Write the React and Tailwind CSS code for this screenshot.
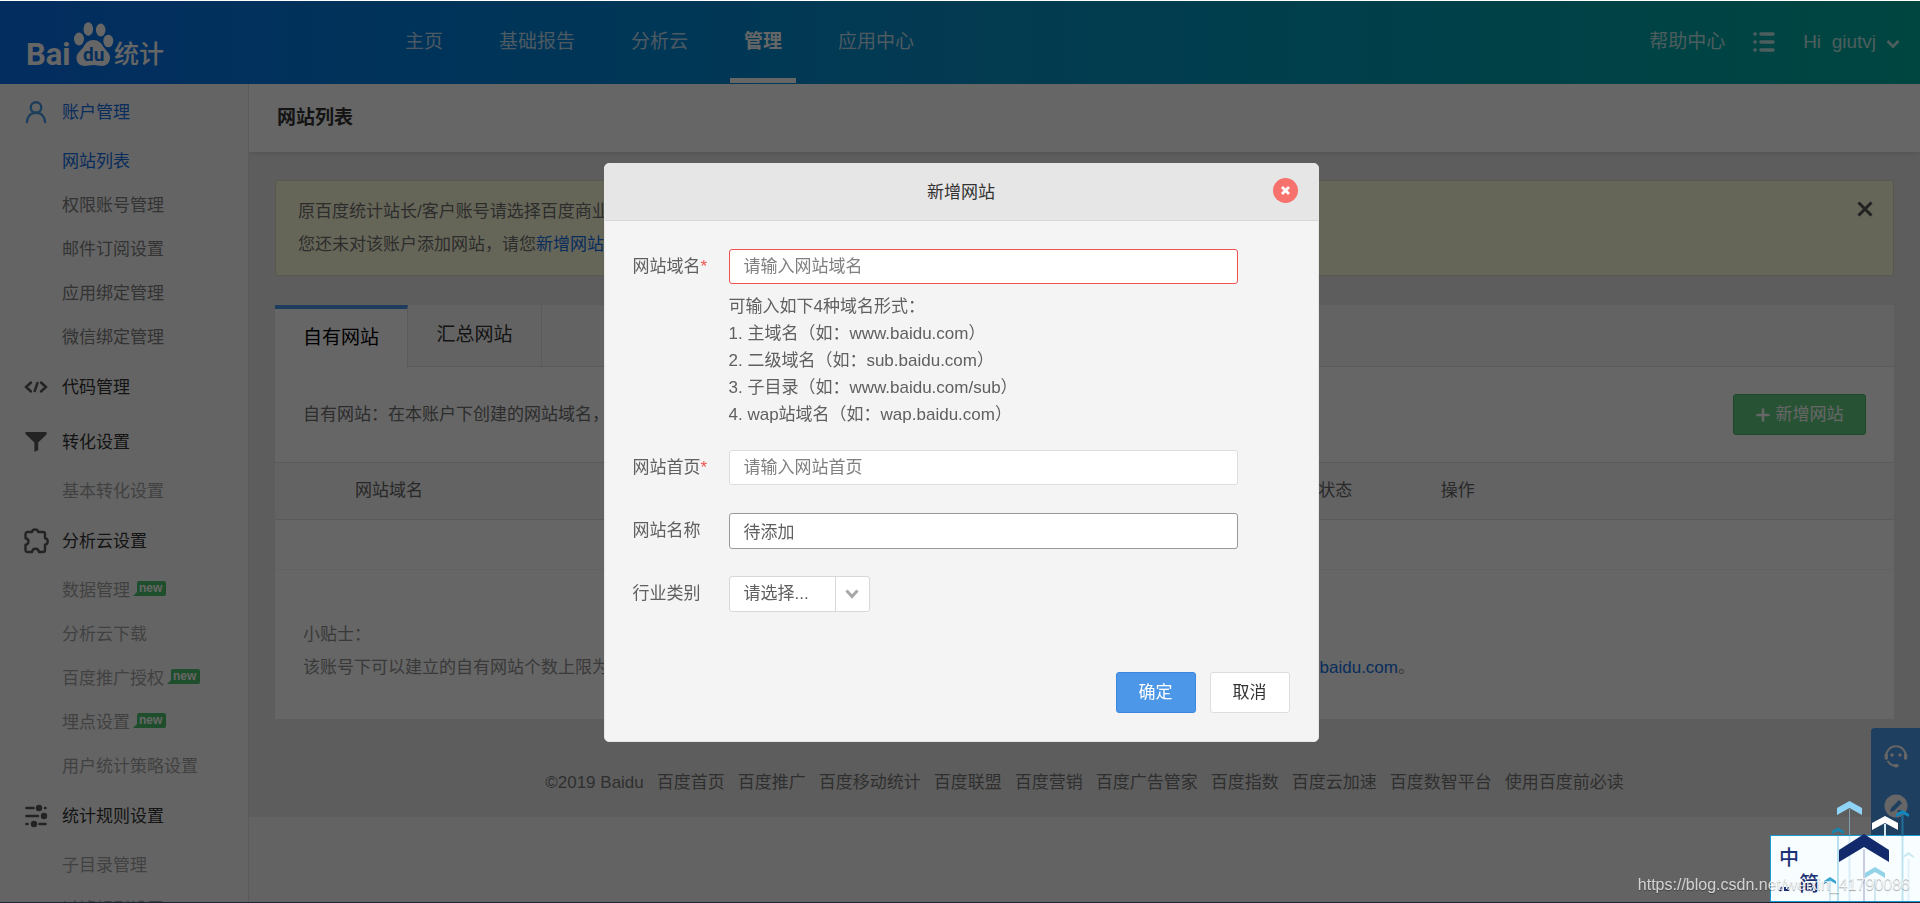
import { useState } from 'react';

const navItems = ['主页', '基础报告', '分析云', '管理', '应用中心'];

const menuGroups = [
    {
        title: '账户管理',
        icon: 'user',
        active: true,
        items: [
            { name: '网站列表', active: true },
            { name: '权限账号管理' },
            { name: '邮件订阅设置' },
            { name: '应用绑定管理' },
            { name: '微信绑定管理' }
        ]
    },
    { title: '代码管理', icon: 'code', items: [] },
    { title: '转化设置', icon: 'filter', items: [{ name: '基本转化设置', muted: true }] },
    {
        title: '分析云设置',
        icon: 'puzzle',
        items: [
            { name: '数据管理', muted: true, isNew: true },
            { name: '分析云下载', muted: true },
            { name: '百度推广授权', muted: true, isNew: true },
            { name: '埋点设置', muted: true, isNew: true },
            { name: '用户统计策略设置', muted: true }
        ]
    },
    {
        title: '统计规则设置',
        icon: 'sliders',
        items: [
            { name: '子目录管理', muted: true },
            { name: '过滤规则设置', muted: true }
        ]
    }
];

const footerLinks = ['百度首页', '百度推广', '百度移动统计', '百度联盟', '百度营销', '百度广告管家', '百度指数', '百度云加速', '百度数智平台', '使用百度前必读'];

const domainTips = [
    '可输入如下4种域名形式：',
    '1. 主域名（如：www.baidu.com）',
    '2. 二级域名（如：sub.baidu.com）',
    '3. 子目录（如：www.baidu.com/sub）',
    '4. wap站域名（如：wap.baidu.com）'
];

const Logo = () => (
    <svg width="140" height="50" viewBox="0 0 140 50" fill="#fff" className="block overflow-visible">
        <text x="-2" y="47" fontSize="31" fontWeight="700" fontFamily="Roboto, sans-serif">Bai</text>
        <ellipse cx="51" cy="21" rx="5" ry="6.500" />
        <ellipse cx="60.300" cy="11" rx="4.800" ry="6.800" />
        <ellipse cx="72.700" cy="12" rx="4.800" ry="6.500" />
        <ellipse cx="80.300" cy="23" rx="5" ry="6.300" />
        <path d="M65.500 22c5 0 8 3 10 7 3 4 6.500 6 6.500 11 0 5-4 8-8 8-3 0-5-1-8.500-1s-5.500 1-8.500 1c-5 0-8.500-3-8.500-8 0-5 4-7 7-11 2-4 5-7 10-7z" />
        <text x="55" y="43" fontSize="19" fontWeight="700" fill="#0d74e4" fontFamily="Roboto, sans-serif">du</text>
        <text x="86" y="45" fontSize="25" fontWeight="500" fontFamily="Noto Sans CJK SC, sans-serif">统计</text>
    </svg>
);

const MenuIcon = ({ name }) => {
    if (name === 'user') {
        return (
            <svg width="24" height="24" viewBox="0 0 24 24" fill="none" stroke="#4a98e8" strokeWidth="2.4" strokeLinecap="round">
                <circle cx="12" cy="7.500" r="5.300" />
                <path d="M3 22c.4-5.500 3.600-9.200 9-9.200s8.600 3.700 9 9.200" />
            </svg>
        );
    }
    if (name === 'code') {
        return (
            <svg width="24" height="24" viewBox="0 0 24 24" fill="none" stroke="#585858" strokeWidth="2.400" strokeLinecap="round">
                <path d="M7 7.500L2 12l5 4.500M17 7.500L22 12l-5 4.500M13.500 8l-2.800 8" />
            </svg>
        );
    }
    if (name === 'filter') {
        return (
            <svg width="24" height="24" viewBox="0 0 24 24" fill="#585858">
                <path d="M1.500 2h21v2.500l-8.300 8V20l-3.800 2v-9.500L1.500 4z" />
            </svg>
        );
    }
    if (name === 'puzzle') {
        return (
            <svg width="26" height="26" viewBox="0 0 26 26" fill="none" stroke="#585858" strokeWidth="2.400" strokeLinejoin="round">
                <path d="M4.500 4H9c.4-3.400 5.800-3.400 6.200 0H20c1.300 0 2 .8 2 2v4.200c3.600.4 3.600 6 0 6.400V22c0 1.300-.7 2-2 2h-4c-.7-4.400-6.300-4.400-7 0H4.500c-1.300 0-2-.7-2-2v-5.200c4-.6 4-6 0-6.600V6c0-1.200.7-2 2-2z" />
            </svg>
        );
    }
    return (
        <svg width="24" height="24" viewBox="0 0 24 24" fill="#585858" stroke="#585858" strokeWidth="2.600" strokeLinecap="round">
            <path d="M2.500 4h7M21 4h.5M2.500 12H14M2.500 20h1M15.500 20h6" />
            <circle cx="15" cy="4" r="1.900" />
            <circle cx="20" cy="12" r="1.900" />
            <circle cx="10" cy="20" r="1.900" />
        </svg>
    );
};

const NewBadge = () => (
    <svg width="33" height="16" viewBox="0 0 33 16" className="mb-1 ml-[3px]">
        <path d="M6 0h25a2 2 0 0 1 2 2v11a2 2 0 0 1-2 2H0l4-4V2a2 2 0 0 1 2-2z" fill="#4cc46c" />
        <text x="6" y="11" fontSize="12" fontWeight="700" fill="#fff" fontFamily="Liberation Sans, sans-serif">new</text>
    </svg>
);

const Header = () => (
    <header className="flex h-[84px] shrink-0 items-center border-t border-white bg-linear-to-r from-[#0a70ee] via-[#0a92cc] to-[#00aea0] text-[19px] text-white/75">
        <a href="#" className="w-[391px] pl-7"><Logo /></a>
        <nav className="flex h-full gap-7 pb-px">
            {navItems.map(item => (
                <a
                    key={item}
                    href="#"
                    className={item === '管理'
                        ? 'border-b-[5px] border-white px-3.5 pt-[25px] font-bold leading-8 text-white'
                        : 'px-3.5 pt-[25px] leading-8'}
                >
                    {item}
                </a>
            ))}
        </nav>
        <div className="ml-auto flex h-full items-start pr-5 pt-[25px] leading-8">
            <a href="#">帮助中心</a>
            <button type="button" aria-label="菜单" className="ml-7 flex h-8 items-center">
                <svg width="22" height="20" viewBox="0 0 22 20" stroke="currentColor" strokeWidth="3.600" strokeLinecap="round">
                    <path d="M2 2h.1M8 2h12M2 10h.1M8 10h12M2 18h.1M8 18h12" />
                </svg>
            </button>
            <button type="button" className="ml-7 flex items-center whitespace-pre">
                {'Hi  giutvj'}
                <svg width="14" height="10" viewBox="0 0 14 10" fill="none" stroke="currentColor" strokeWidth="2.800" className="ml-2.5 mt-1">
                    <path d="M1.500 2L7 7.500 12.500 2" />
                </svg>
            </button>
        </div>
    </header>
);

const Sidebar = () => (
    <aside className="w-[249px] shrink-0 overflow-hidden border-r border-[#e2e2e2] bg-[#fafafa] pt-px">
        {menuGroups.map(group => (
            <div key={group.title}>
                <a href="#" className={group.active ? 'flex h-[55px] items-center text-[#1470e8]' : 'flex h-[55px] items-center text-[#333]'}>
                    <span className="flex w-[62px] justify-center pb-0.5 pl-2.5"><MenuIcon name={group.icon} /></span>
                    {group.title}
                </a>
                <ul>
                    {group.items.map(item => (
                        <li key={item.name}>
                            <a
                                href="#"
                                className={item.active
                                    ? 'flex h-11 items-center pl-[62px] text-[#1470e8]'
                                    : item.muted
                                        ? 'flex h-11 items-center pl-[62px] text-[#a4a4a4]'
                                        : 'flex h-11 items-center pl-[62px] text-[#808080]'}
                            >
                                {item.name}
                                {item.isNew && <NewBadge />}
                            </a>
                        </li>
                    ))}
                </ul>
            </div>
        ))}
    </aside>
);

const SiteList = () => (
    <main className="min-w-0 flex-1 overflow-hidden bg-[#f8f8f8]">
        <div className="relative flex h-[68px] items-center bg-white pl-7 shadow-[0_1px_6px_rgba(0,0,0,0.12)]">
            <h1 className="text-[19px] font-bold text-[#333]">网站列表</h1>
        </div>
        <div className="bg-[#e9e9e9] px-[26px] pt-7">
            <div className="flex items-start justify-between rounded-[3px] border border-[#dcdcc4] bg-[#ffffdc] py-[14px] pl-[22px] pr-5 leading-[33px] text-[#707070]">
                <div>
                    <p>原百度统计站长/客户账号请选择百度商业账户登录</p>
                    <p>您还未对该账户添加网站，请您<a href="#" className="text-[#1470e8]">新增网站</a>，</p>
                </div>
                <button type="button" aria-label="关闭提示" className="mt-1.5">
                    <svg width="16" height="16" viewBox="0 0 16 16" stroke="#555" strokeWidth="3">
                        <path d="M1.500 1.500l13 13M14.500 1.500l-13 13" />
                    </svg>
                </button>
            </div>

            <section className="mt-[29px] bg-white">
                <div className="flex h-[62px] text-[19px] text-[#333]">
                    <button type="button" className="w-[133px] border-r border-t-4 border-r-[#e2e2e2] border-t-[#4b97e8] text-black">自有网站</button>
                    <button type="button" className="w-[134px] border-b border-r border-[#e2e2e2] bg-[#f8f8f8]">汇总网站</button>
                    <div className="flex-1 border-b border-[#e2e2e2] bg-[#f8f8f8]" />
                </div>
                <div className="flex h-[95px] items-center justify-between px-7 text-[#707070]">
                    <p>自有网站：在本账户下创建的网站域名，报告</p>
                    <button type="button" className="flex h-[41px] w-[133px] items-center justify-center gap-1.5 rounded-[3px] border border-[#48b866] bg-[#62cf82] text-white">
                        <svg width="14" height="14" viewBox="0 0 14 14" stroke="currentColor" strokeWidth="2.600" strokeLinecap="round">
                            <path d="M7 1.500v11M1.500 7h11" />
                        </svg>
                        新增网站
                    </button>
                </div>
                <table className="w-full table-fixed text-left text-[#666]">
                    <thead>
                        <tr className="h-[57px] border-y border-[#e2e2e2] bg-[#f8f8f8]">
                            <th className="w-[30%] pl-20 font-normal">网站域名</th>
                            <th className="w-[30%] font-normal">网站首页</th>
                            <th className="w-[12%] pl-1 font-normal">首页代码状态</th>
                            <th className="font-normal">操作</th>
                        </tr>
                    </thead>
                    <tbody>
                        <tr className="h-[50px] border-b border-[#f2f2f2]">
                            <td colSpan={4} />
                        </tr>
                    </tbody>
                </table>
                <div className="px-7 pb-[35px] pt-12 leading-[33px] text-[#909090]">
                    <p>小贴士：</p>
                    <p>该账号下可以建立的自有网站个数上限为30个，如果您需要建立更多的网站，请将您的账户名和所需增加的网站个数发送邮件至 <a href="#" className="text-[#1470e8]">tongji@baidu.com</a>。</p>
                </div>
            </section>

            <footer className="mt-[46px] flex justify-center gap-[13px] whitespace-nowrap pb-4 leading-9 text-[#777]">
                <span>©2019 Baidu</span>
                {footerLinks.map(link => <a key={link} href="#">{link}</a>)}
            </footer>
        </div>
    </main>
);

const FloatingTools = () => (
    <div className="fixed bottom-0 right-0 flex h-[175px] w-[49px] flex-col items-center gap-[26px] rounded-tl bg-[#4b9dee] pt-4 text-white">
        <button type="button" aria-label="在线客服">
            <svg width="24" height="24" viewBox="0 0 24 24" fill="none" stroke="currentColor" strokeWidth="2" strokeLinecap="round">
                <path d="M2.500 14.500A9.800 9.800 0 1 1 21.500 14.500M4 17.500A9.800 9.800 0 0 0 12 21.800" />
                <path d="M2.200 11v3M21.600 11v3M11.500 21.700h1.500" strokeWidth="3.400" />
                <path d="M8 11v.1M16 11v.1" strokeWidth="3.400" />
            </svg>
        </button>
        <button type="button" aria-label="意见反馈">
            <svg width="24" height="24" viewBox="0 0 24 24">
                <circle cx="12" cy="12" r="11.500" fill="#fff" />
                <path d="M6 18l1-4 8-8 3 3-8 8zM13 18h5v-1.800h-4z" fill="#4b9dee" />
            </svg>
        </button>
    </div>
);

const AddSiteDialog = () => {
    const [formData, setFormData] = useState({
        domain: '',
        homepage: '',
        name: '待添加',
        industry: ''
    });

    const handleChange = (e) => {
        const { name, value } = e.target;
        setFormData(prevData => ({
            ...prevData,
            [name]: value
        }));
    };

    return (
        <div className="fixed inset-x-0 bottom-0 top-px flex items-start justify-center bg-black/60 pl-0.5 pt-[162px]">
            <form
                role="dialog"
                aria-labelledby="dialog-title"
                onSubmit={e => e.preventDefault()}
                className="w-[715px] overflow-hidden rounded-[5px] border border-[#e6e6e6] bg-[#f4f4f4] text-[#606060]"
            >
                <div className="relative flex h-[57px] items-center justify-center border-b border-[#d8d8d8] bg-[#e6e6e6]">
                    <h2 id="dialog-title" className="pt-0.5 text-[#333]">新增网站</h2>
                    <button type="button" aria-label="关闭" className="absolute right-5 top-3.5">
                        <svg width="25" height="25" viewBox="0 0 25 25">
                            <circle cx="12.500" cy="12.500" r="12.500" fill="#f7716d" />
                            <path d="M9 9l7 7M16 9l-7 7" stroke="#fff" strokeWidth="2.800" />
                        </svg>
                    </button>
                </div>

                <div className="flex flex-col gap-7 px-7 pt-7">
                    <div className="flex">
                        <label htmlFor="domain" className="w-24 leading-9">网站域名<span className="text-[#f0524e]">*</span></label>
                        <div>
                            <input
                                type="text"
                                id="domain"
                                name="domain"
                                placeholder="请输入网站域名"
                                value={formData.domain}
                                onChange={handleChange}
                                className="block h-[35px] w-[509px] rounded-[3px] border border-[#f0524e] bg-white px-3.5 placeholder:text-[#808080]"
                            />
                            <ul className="mt-[9px] leading-[27px]">
                                {domainTips.map(tip => <li key={tip}>{tip}</li>)}
                            </ul>
                        </div>
                    </div>
                    <div className="-mt-1.5 flex">
                        <label htmlFor="homepage" className="w-24 leading-9">网站首页<span className="text-[#f0524e]">*</span></label>
                        <input
                            type="text"
                            id="homepage"
                            name="homepage"
                            placeholder="请输入网站首页"
                            value={formData.homepage}
                            onChange={handleChange}
                            className="h-[35px] w-[509px] rounded-[3px] border border-[#ddd] bg-white px-3.5 placeholder:text-[#808080]"
                        />
                    </div>
                    <div className="-mt-px flex">
                        <label htmlFor="name" className="w-24 leading-9">网站名称</label>
                        <input
                            type="text"
                            id="name"
                            name="name"
                            value={formData.name}
                            onChange={handleChange}
                            className="h-9 w-[509px] rounded-[3px] border border-[#999] bg-white px-3.5 pb-0.5"
                        />
                    </div>
                    <div className="-mt-px flex">
                        <label htmlFor="industry" className="w-24 leading-9">行业类别</label>
                        <div className="relative">
                            <select
                                id="industry"
                                name="industry"
                                value={formData.industry}
                                onChange={handleChange}
                                className="h-9 w-[141px] appearance-none rounded-[3px] border border-[#d8d8d8] bg-white px-3.5"
                            >
                                <option value="">请选择...</option>
                            </select>
                            <span className="pointer-events-none absolute right-px top-px flex h-[34px] w-[34px] items-center justify-center border-l border-[#d8d8d8]">
                                <svg width="14" height="10" viewBox="0 0 14 10" fill="none" stroke="#a8a8a8" strokeWidth="3">
                                    <path d="M1.500 1.500L7 7.500l5.500-6" />
                                </svg>
                            </span>
                        </div>
                    </div>
                </div>

                <div className="flex justify-end gap-3.5 px-7 pb-7 pt-[60px]">
                    <button type="submit" className="h-[41px] w-20 rounded-[3px] border border-[#3a87e0] bg-[#4d97e8] text-white">确定</button>
                    <button type="button" className="h-[41px] w-20 rounded-[3px] border border-[#ddd] bg-white text-[#333]">取消</button>
                </div>
            </form>
        </div>
    );
};

// Input method bar docked in the corner, with its arrow decoration
const InputMethodBar = () => (
    <div className="fixed bottom-0 right-0">
        <svg width="150" height="104" viewBox="0 0 150 104" className="block">
            <rect x=".5" y="36.500" width="151" height="66" fill="#f8fdff" stroke="#1b9bd4" />
            <g strokeWidth="2">
                <path d="M79.500 10v26" stroke="#7f9db0" strokeWidth="1" />
                <path d="M79.500 37v65" stroke="#d9eef8" />
                <path d="M68 37v65" stroke="#b8e0ee" />
                <path d="M60 82v20M105 80v22M115 25v12" stroke="#cfe8f2" />
                <path d="M132.500 16v21" stroke="#1f6f9a" />
                <path d="M132.500 37v65" stroke="#bfe4f0" />
                <path d="M94 50v52" stroke="#c8cfe2" />
                <path d="M138.500 60v42" stroke="#e2f2f8" />
            </g>
            <text x="9" y="66" fontSize="20" fontWeight="500" fill="#1d3274" fontFamily="Noto Sans CJK SC, sans-serif">中</text>
            <text x="29" y="92" fontSize="20" fontWeight="500" fill="#1d3274" fontFamily="Noto Sans CJK SC, sans-serif">简</text>
            <path d="M10 92l2-4M15 88v3h3v-3" stroke="#1d3274" strokeWidth="2" fill="none" />
            <path d="M67 9l12.500-7L92 9v7l-12.500-7L67 16z" fill="#8fd3f7" />
            <path d="M62 32l6-3.500 6 3.500v3l-6-3-6 3z" fill="#1985b0" />
            <path d="M102 24l13-7 13 7v7l-13-7-13 7z" fill="#fff" />
            <path d="M126 15l6.500-4 6.500 4v3l-6.500-3-6.500 3z" fill="#1287bd" />
            <path d="M69 51l25-16 25 16v12L94 48 69 63z" fill="#122a6b" />
            <path d="M95 74l10-6 10 6v5l-10-6-10 6z" fill="#93d3e8" />
            <path d="M54 82l6-4 6 4v3l-6-3.500-6 3.500z" fill="#3ba7d0" />
            <path d="M133 57l5.500-4 5.500 4v2l-5.500-3-5.500 3z" fill="#cbeaf3" />
        </svg>
    </div>
);

const App = () => (
    <div className="flex h-screen flex-col overflow-hidden bg-white font-['Liberation_Sans','Noto_Sans_CJK_SC',sans-serif] text-[17px]">
        <Header />
        <div className="flex min-h-0 flex-1">
            <Sidebar />
            <SiteList />
        </div>
        <FloatingTools />
        <AddSiteDialog />
        <div className="fixed inset-x-0 bottom-0 h-px bg-[#23233a]" />
        <InputMethodBar />
        <p className="pointer-events-none fixed bottom-1.5 right-2.5 text-base text-white/75 [text-shadow:0_1px_1px_rgba(0,0,0,0.35)]">https://blog.csdn.net/weixin_41790086</p>
    </div>
);

export default App;
